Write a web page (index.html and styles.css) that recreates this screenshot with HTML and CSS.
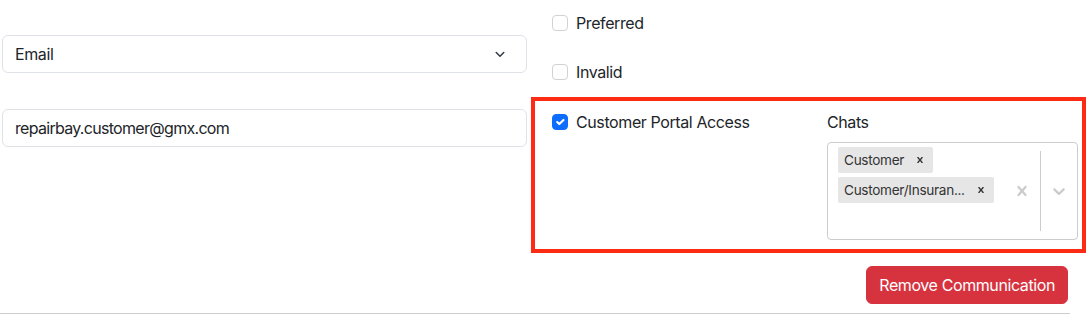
FILE: index.html
```html
<!doctype html>
<html lang="en">
  <head>
    <meta charset="UTF-8" />
    <title>Communication</title>
    <link rel="stylesheet" href="styles.css">
  </head>
  <body>
    <div class="communication">
      <div class="comm-row">
        <div class="col-left">
          <div class="form-select">
            <span>Email</span>
            <svg class="select-arrow" viewBox="0 0 16 16" width="12" height="12">
              <path d="M3 6l5 5 5-5" fill="none" stroke="#343a40" stroke-width="2" stroke-linecap="round" stroke-linejoin="round" />
            </svg>
          </div>
          <div class="form-control email-value">repairbay.customer@gmx.com</div>
        </div>

        <div class="col-right">
          <label class="form-check">
            <span class="check-box"></span>
            Preferred
          </label>
          <label class="form-check">
            <span class="check-box"></span>
            Invalid
          </label>

          <div class="portal-box">
            <div class="portal-col">
              <label class="form-check">
                <span class="check-box checked">
                  <svg viewBox="0 0 20 20" width="16" height="16">
                    <path d="M6 10l3 3 6-6" fill="none" stroke="#ffffff" stroke-width="3" stroke-linecap="round" stroke-linejoin="round" />
                  </svg>
                </span>
                Customer Portal Access
              </label>
            </div>
            <div class="chats-col">
              <div class="chats-label">Chats</div>
              <div class="multi-select">
                <div class="multi-values">
                  <div class="tag">
                    <span class="tag-label">Customer</span>
                    <span class="tag-remove">
                      <svg viewBox="0 0 20 20" width="12" height="12">
                        <path d="M14.35 14.85c-.47.47-1.23.47-1.7 0L10 11.82l-2.65 3.03c-.47.47-1.230.47-1.7 0-.47-.47-.47-1.23 0-1.7L8.41 10 5.650 6.85c-.47-.47-.47-1.23 0-1.7s1.23-.47 1.7 0L10 8.18l2.65-3.03c.47-.47 1.23-.47 1.7 0s.47 1.23 0 1.7L11.59 10l2.76 3.15c.47.47.47 1.23 0 1.7z" fill="#333333" />
                      </svg>
                    </span>
                  </div>
                  <div class="tag">
                    <span class="tag-label">Customer/Insuran...</span>
                    <span class="tag-remove">
                      <svg viewBox="0 0 20 20" width="12" height="12">
                        <path d="M14.35 14.85c-.47.47-1.23.47-1.7 0L10 11.82l-2.65 3.03c-.47.47-1.23.47-1.7 0-.47-.47-.47-1.23 0-1.7L8.41 10 5.65 6.85c-.47-.47-.47-1.23 0-1.7s1.23-.47 1.7 0L10 8.18l2.65-3.03c.47-.47 1.23-.47 1.7 0s.47 1.23 0 1.7L11.59 10l2.76 3.15c.47.47.47 1.23 0 1.7z" fill="#333333" />
                      </svg>
                    </span>
                  </div>
                  <div class="multi-input"></div>
                </div>
                <div class="indicators">
                  <span class="indicator">
                    <svg viewBox="0 0 20 20" width="20" height="20">
                      <path d="M14.35 14.85c-.47.47-1.23.47-1.7 0L10 11.82l-2.65 3.03c-.47.47-1.23.47-1.7 0-.47-.47-.47-1.23 0-1.7L8.41 10 5.65 6.85c-.47-.47-.47-1.23 0-1.7s1.23-.47 1.7 0L10 8.18l2.65-3.03c.47-.47 1.23-.47 1.7 0s.47 1.23 0 1.7L11.59 10l2.76 3.15c.47.47.47 1.23 0 1.7z" fill="#cccccc" />
                    </svg>
                  </span>
                  <span class="indicator-sep"></span>
                  <span class="indicator">
                    <svg viewBox="0 0 20 20" width="20" height="20">
                      <path d="M4.52 7.55c.44-.45 1.04-.48 1.58 0L10 11.3l3.91-3.75c.53-.48 1.14-.45 1.57 0 .44.45.41 1.2 0 1.620-.4.42-4.69 4.5-4.69 4.5-.22.22-.5.34-.79.34s-.57-.12-.79-.34c0 0-4.29-4.08-4.7-4.5s-.43-1.17 0-1.62z" fill="#cccccc" />
                    </svg>
                  </span>
                </div>
              </div>
            </div>
          </div>

          <div class="actions">
            <button class="btn-danger">Remove Communication</button>
          </div>
        </div>
      </div>
      <div class="divider"></div>
    </div>
  </body>
</html>
```

FILE: styles.css
```css
* {
  margin: 0;
  padding: 0;
  box-sizing: border-box;
}

body {
  font-family: 'Inter', 'Liberation Sans', sans-serif;
  font-size: 16px;
  line-height: 24px;
  letter-spacing: -0.4px;
  color: #212529;
  background: #ffffff;
  overflow: hidden;
}

.comm-row {
  display: flex;
}

.col-left {
  width: 525px;
  margin-left: 2px;
}

.form-select,
.form-control {
  height: 38px;
  border: 1px solid #dee2e6;
  border-radius: 6px;
  padding: 6px 12px;
  display: flex;
  align-items: center;
}

.form-select {
  margin-top: 35px;
  justify-content: space-between;
}

.select-arrow {
  margin-right: 8px;
}

.form-control {
  margin-top: 36px;
}

.email-value {
  letter-spacing: -0.7px;
}

.col-right {
  width: 555px;
  margin-left: 4px;
}

.form-check {
  display: flex;
  align-items: flex-start;
  gap: 8px;
  padding-left: 21px;
  height: 24px;
  margin-top: 11px;
}

.form-check + .form-check {
  margin-top: 25px;
}

.check-box {
  width: 16px;
  height: 16px;
  margin-top: 4px;
  border: 1px solid #cfd2d6;
  border-radius: 4px;
  background: #ffffff;
  flex-shrink: 0;
}

.check-box.checked {
  background: #0d6efd;
  border-color: #0d6efd;
  display: flex;
  align-items: center;
  justify-content: center;
}

.check-box.checked svg {
  width: 14px;
  height: 14px;
}

.portal-box {
  margin-top: 13px;
  border: 4px solid #fd2a14;
  display: grid;
  grid-template-columns: 292px minmax(0, 1fr);
  padding: 9px 4px 9px 0;
}

.portal-box .form-check {
  margin-top: 0;
  padding-left: 17px;
}

.chats-col {
  min-width: 0;
}

.chats-label {
  height: 24px;
  margin-bottom: 8px;
}

.multi-select {
  display: flex;
  border: 1px solid #cccccc;
  border-radius: 4px;
  min-height: 98px;
}

.multi-values {
  flex: 1;
  min-width: 0;
  display: flex;
  flex-wrap: wrap;
  align-content: flex-start;
  padding: 2px 8px;
}

.tag {
  display: flex;
  align-items: center;
  height: 26px;
  margin: 2px;
  background: #e6e6e6;
  border-radius: 2px;
  font-size: 13.6px;
  letter-spacing: -0.3px;
  color: #333333;
}

.tag-label {
  padding: 0 6px;
  white-space: nowrap;
}

.tag-remove {
  display: flex;
  align-items: center;
  padding: 0 7px 0 4px;
}

.multi-input {
  width: 100%;
  height: 32px;
}

.indicators {
  display: flex;
  align-items: center;
}

.indicator {
  display: flex;
  padding: 8px;
}

.indicator-sep {
  align-self: stretch;
  width: 1px;
  margin: 8px 0;
  background: #cccccc;
}

.actions {
  display: flex;
  justify-content: flex-end;
  padding-right: 18px;
  margin-top: 13px;
}

.btn-danger {
  font-family: inherit;
  font-size: 16px;
  line-height: 24px;
  letter-spacing: -0.4px;
  color: #ffffff;
  background: #d7333f;
  border: 1px solid #d7333f;
  border-radius: 6px;
  padding: 6px 12px;
  height: 38px;
}

.divider {
  width: 1070px;
  margin-top: 9px;
  border-top: 1px solid #cccccc;
}
```
